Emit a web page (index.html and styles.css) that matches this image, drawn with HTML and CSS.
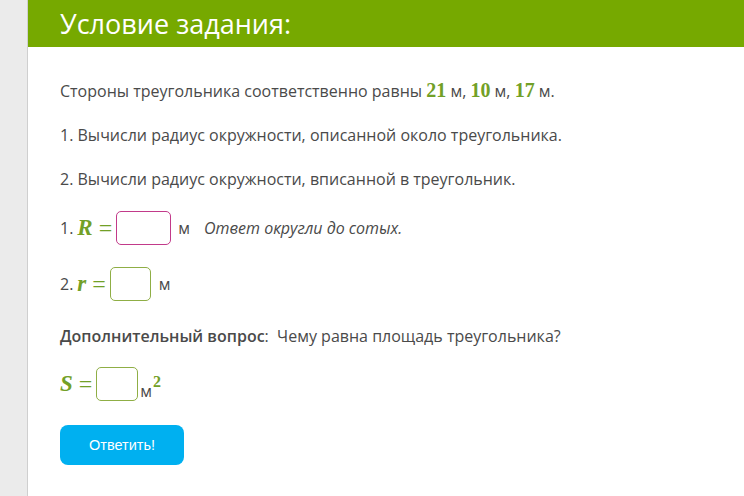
FILE: index.html
```html
<!DOCTYPE html>
<html lang="ru">
<head>
<meta charset="utf-8">
<link rel="stylesheet" href="styles.css">
</head>
<body>
<div class="page">
  <aside class="side"></aside>
  <main class="main">
    <header class="head"><h1>Условие задания:</h1></header>
    <section class="content">
      <p class="line l1">Стороны треугольника соответственно равны <span class="num">21</span> м, <span class="num">10</span> м, <span class="num">17</span> м.</p>
      <p class="line l2">1. Вычисли радиус окружности, описанной около треугольника.</p>
      <p class="line l3">2. Вычисли радиус окружности, вписанной в треугольник.</p>
      <div class="row r1"><span class="idx">1.</span><span class="var">R</span><span class="eq">=</span><span class="box pink w55"></span><span class="unit">м</span><span class="hint">Ответ округли до сотых.</span></div>
      <div class="row r2"><span class="idx">2.</span><span class="var">r</span><span class="eq">=</span><span class="box green w41"></span><span class="unit u2">м</span></div>
      <p class="line l4"><b>Дополнительный вопрос</b>:&nbsp; Чему равна площадь треугольника?</p>
      <div class="row r3"><span class="var">S</span><span class="eq">=</span><span class="box green w42"></span><span class="unit2">м<sup>2</sup></span></div>
      <button class="btn">Ответить!</button>
    </section>
  </main>
</div>
</body>
</html>
```
FILE: styles.css
```css
* { box-sizing: border-box; }
html, body { margin: 0; padding: 0; background: #fff; }
body { font-family: "Open Sans", sans-serif; color: #4a4a4a; }
.page { display: flex; width: 744px; height: 496px; overflow: hidden; }
.side { width: 28px; flex: none; background: #ebebeb; border-right: 1px solid #cfcfcf; }
.main { flex: 1; }
.head { height: 47px; background: #76a900; padding-left: 32px; }
.head h1 { margin: 0; font-weight: 400; font-size: 27px; color: #fff; line-height: 47px; }
.content { padding: 0 0 0 32px; font-size: 16px; }
.line { margin: 0; line-height: 20px; }
.line b { font-weight: 600; }
.l1 { margin-top: 33px; }
.l2 { margin-top: 24px; }
.l3 { margin-top: 24px; }
.l4 { margin-top: 25px; }
.num { font-family: "Liberation Serif", serif; font-weight: 700; color: #72a027; font-size: 20px; }
.row { display: flex; align-items: center; height: 34px; }
.r1 { margin-top: 22px; }
.r2 { margin-top: 22px; }
.r3 { margin-top: 21px; }
.idx { margin-right: 4px; }
.var { font-family: "Liberation Serif", serif; font-weight: 700; font-style: italic; color: #72a027; font-size: 23px; }
.eq { font-family: "Liberation Serif", serif; color: #72a027; font-size: 24px; margin: 0 4px 0 6px; line-height: 1; }
.box { display: inline-block; height: 34px; border-radius: 5px; background: #fff; }
.pink { border: 1.5px solid #c23a8a; }
.green { border: 1.5px solid #8fae45; }
.w55 { width: 55px; }
.w41 { width: 41px; }
.w42 { width: 42px; }
.unit { margin-left: 7px; }
.u2 { margin-left: 8px; }
.hint { font-style: italic; margin-left: 14px; }
.unit2 { margin-left: 2px; position: relative; top: 3px; }
.unit2 sup { font-family: "Liberation Serif", serif; font-weight: 700; color: #72a027; font-size: 16px; vertical-align: 10px; margin-left: 1px; }
.btn { display: block; margin-top: 24px; width: 124px; height: 40px; border: none; border-radius: 8px; background: #00b0f0; color: #fff; font-family: "Liberation Sans", sans-serif; font-size: 14.5px; padding: 0; }
```
